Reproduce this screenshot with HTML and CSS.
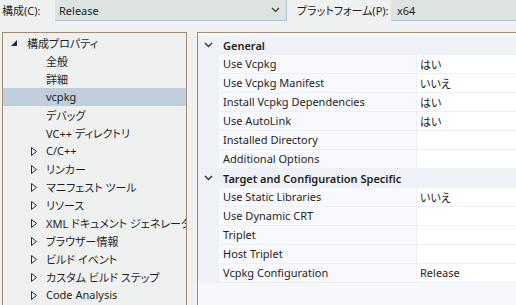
FILE: index.html
```html
<!DOCTYPE html>
<html lang="ja">
<head>
    <meta charset="UTF-8">
    <title>vcpkg プロパティ</title>
    <link rel="stylesheet" href="styles.css">
</head>
<body>
    <!-- 構成とプラットフォーム -->
    <div class="toolbar">
        <span class="label label-config">構成(C):</span>
        <div class="combo combo-config">
            <span>Release</span>
            <svg class="combo-arrow" width="9" height="6" viewBox="0 0 9 6"><polyline points="1,1 4.5,4.5 8,1" fill="none" stroke="#333" stroke-width="1.2"/></svg>
        </div>
        <span class="label label-platform">プラットフォーム(P):</span>
        <div class="combo combo-platform"><span>x64</span></div>
    </div>

    <div class="panels">
        <!-- ツリー -->
        <div class="tree">
            <div class="node root">
                <svg class="expanded" width="6" height="6" viewBox="0 0 6 6"><polygon points="6,0 6,6 0,6" fill="#2b2b2b"/></svg>
                <span>構成プロパティ</span>
            </div>
            <div class="node child"><span>全般</span></div>
            <div class="node child"><span>詳細</span></div>
            <div class="node child selected"><span>vcpkg</span></div>
            <div class="node child"><span>デバッグ</span></div>
            <div class="node child"><span>VC++ ディレクトリ</span></div>
            <div class="node child"><svg class="collapsed" width="6" height="9" viewBox="0 0 6 9"><polygon points="0.5,0.5 5.5,4.5 0.5,8.5" fill="none" stroke="#2b2b2b"/></svg><span>C/C++</span></div>
            <div class="node child"><svg class="collapsed" width="6" height="9" viewBox="0 0 6 9"><polygon points="0.5,0.5 5.5,4.5 0.5,8.5" fill="none" stroke="#2b2b2b"/></svg><span>リンカー</span></div>
            <div class="node child"><svg class="collapsed" width="6" height="9" viewBox="0 0 6 9"><polygon points="0.5,0.5 5.5,4.5 0.5,8.5" fill="none" stroke="#2b2b2b"/></svg><span>マニフェスト ツール</span></div>
            <div class="node child"><svg class="collapsed" width="6" height="9" viewBox="0 0 6 9"><polygon points="0.5,0.5 5.5,4.5 0.5,8.5" fill="none" stroke="#2b2b2b"/></svg><span>リソース</span></div>
            <div class="node child"><svg class="collapsed" width="6" height="9" viewBox="0 0 6 9"><polygon points="0.5,0.5 5.5,4.5 0.5,8.5" fill="none" stroke="#2b2b2b"/></svg><span>XML ドキュメント ジェネレーター</span></div>
            <div class="node child"><svg class="collapsed" width="6" height="9" viewBox="0 0 6 9"><polygon points="0.5,0.5 5.5,4.5 0.5,8.5" fill="none" stroke="#2b2b2b"/></svg><span>ブラウザー情報</span></div>
            <div class="node child"><svg class="collapsed" width="6" height="9" viewBox="0 0 6 9"><polygon points="0.5,0.5 5.5,4.5 0.5,8.5" fill="none" stroke="#2b2b2b"/></svg><span>ビルド イベント</span></div>
            <div class="node child"><svg class="collapsed" width="6" height="9" viewBox="0 0 6 9"><polygon points="0.5,0.5 5.5,4.5 0.5,8.5" fill="none" stroke="#2b2b2b"/></svg><span>カスタム ビルド ステップ</span></div>
            <div class="node child"><svg class="collapsed" width="6" height="9" viewBox="0 0 6 9"><polygon points="0.5,0.5 5.5,4.5 0.5,8.5" fill="none" stroke="#2b2b2b"/></svg><span>Code Analysis</span></div>
        </div>

        <!-- プロパティ グリッド -->
        <div class="grid">
            <div class="category">
                <svg class="chev" width="9" height="6" viewBox="0 0 9 6"><polyline points="1,1 4.5,4.5 8,1" fill="none" stroke="#333" stroke-width="1.4"/></svg>
                <span>General</span>
            </div>
            <div class="prop"><span class="gutter"></span><span class="name">Use Vcpkg</span><span class="value">はい</span></div>
            <div class="prop"><span class="gutter"></span><span class="name">Use Vcpkg Manifest</span><span class="value">いいえ</span></div>
            <div class="prop"><span class="gutter"></span><span class="name">Install Vcpkg Dependencies</span><span class="value">はい</span></div>
            <div class="prop"><span class="gutter"></span><span class="name">Use AutoLink</span><span class="value">はい</span></div>
            <div class="prop"><span class="gutter"></span><span class="name">Installed Directory</span><span class="value"></span></div>
            <div class="prop"><span class="gutter"></span><span class="name">Additional Options</span><span class="value"></span></div>
            <div class="category">
                <svg class="chev" width="9" height="6" viewBox="0 0 9 6"><polyline points="1,1 4.5,4.5 8,1" fill="none" stroke="#333" stroke-width="1.4"/></svg>
                <span>Target and Configuration Specific</span>
            </div>
            <div class="prop"><span class="gutter"></span><span class="name">Use Static Libraries</span><span class="value">いいえ</span></div>
            <div class="prop"><span class="gutter"></span><span class="name">Use Dynamic CRT</span><span class="value"></span></div>
            <div class="prop"><span class="gutter"></span><span class="name">Triplet</span><span class="value"></span></div>
            <div class="prop"><span class="gutter"></span><span class="name">Host Triplet</span><span class="value"></span></div>
            <div class="prop"><span class="gutter"></span><span class="name">Vcpkg Configuration</span><span class="value">Release</span></div>
        </div>
    </div>
</body>
</html>
```

FILE: styles.css
```css
* {
    margin: 0;
    padding: 0;
    box-sizing: border-box;
}

body {
    width: 516px;
    height: 305px;
    overflow: hidden;
    background: #eff1f0;
    font-family: "Noto Sans", "Noto Sans CJK JP", sans-serif;
    font-size: 11px;
    font-feature-settings: "palt";
    color: #1e1e1e;
}

/* Верхняя панель */
.toolbar {
    display: flex;
    height: 21px;
    align-items: stretch;
}

.label {
    display: flex;
    align-items: center;
    padding-bottom: 1px;
    white-space: nowrap;
}

.label-config {
    width: 55px;
    padding-left: 2px;
}

.label-platform {
    width: 104px;
    padding-left: 10px;
}

.combo {
    display: flex;
    align-items: center;
    background: #dce3e1;
    border-right: 1px solid #b4c4d8;
    border-bottom: 1px solid #b4c4d8;
    padding-left: 4px;
}

.combo-config {
    width: 232px;
    justify-content: space-between;
    padding-right: 6px;
}

.combo-platform {
    flex: 1;
    border-right: none;
    padding-left: 6px;
}

/* Панели */
.panels {
    display: flex;
    margin-top: 11px;
    gap: 10px;
    padding-left: 2px;
}

.tree {
    width: 185px;
    height: 273px;
    border: 1px solid #a38c74;
    border-bottom: none;
    padding-top: 1px;
    overflow: hidden;
}

.node {
    display: flex;
    align-items: center;
    height: 18px;
    white-space: nowrap;
    padding-bottom: 1px;
}

.root {
    padding-left: 8px;
}

.root .expanded {
    margin-right: 10px;
    margin-top: 1px;
}

.child {
    position: relative;
    padding-left: 43px;
}

.child .collapsed {
    position: absolute;
    left: 28px;
    top: 5px;
}

.selected {
    background: #c0cddc;
}

.grid {
    flex: 1;
    height: 273px;
    border-top: 1px solid #a38c74;
    border-left: 1px solid #a38c74;
    background: #f6f8fb;
    padding-top: 3px;
}

.category {
    display: flex;
    align-items: center;
    height: 19px;
    background: #eef1f6;
    font-weight: 600;
    white-space: nowrap;
    padding-bottom: 1px;
}

.category .chev {
    margin-left: 6px;
    margin-right: 10px;
}

.prop {
    display: grid;
    grid-template-columns: 21px 197px 1fr;
    height: 19px;
    white-space: nowrap;
}

.prop span {
    display: flex;
    align-items: center;
    padding-bottom: 1px;
}

.gutter {
    background: #eef1f6;
}

.name {
    background: #f8f9fc;
    border-bottom: 1px solid #eceff5;
    padding-left: 4px;
}

.value {
    background: #ffffff;
    border-left: 1px solid #eceff5;
    border-bottom: 1px solid #eceff5;
    padding-left: 3px;
}
```
